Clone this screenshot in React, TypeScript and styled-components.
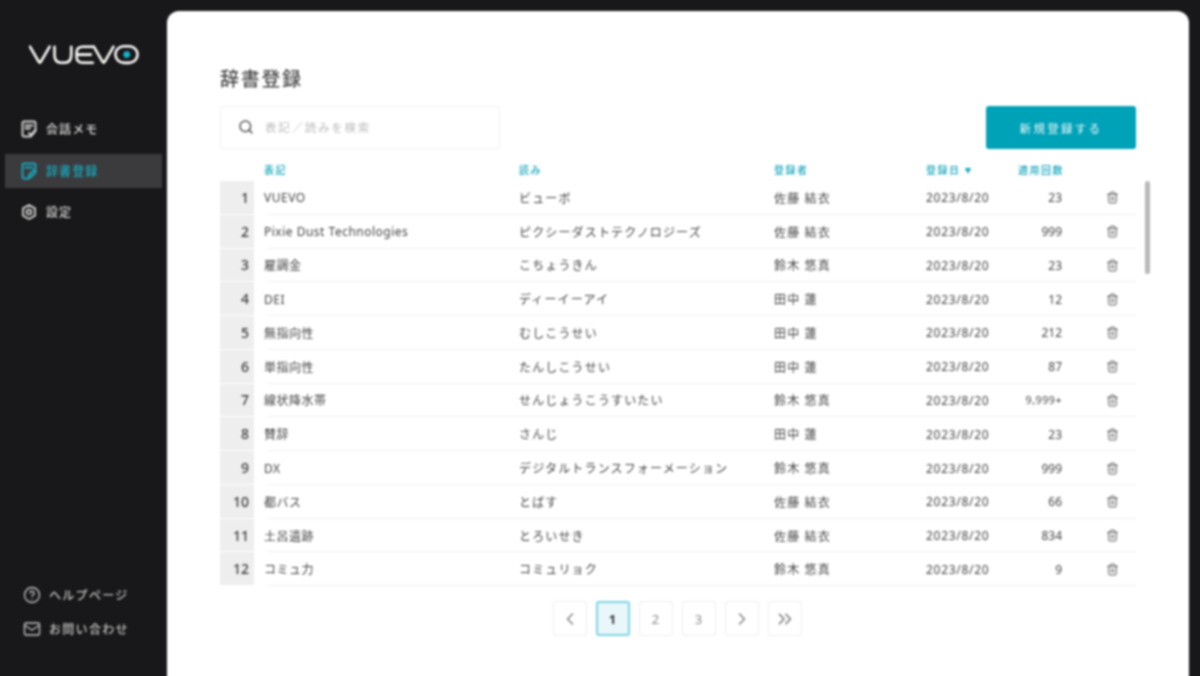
import React from "react";
import styled, { createGlobalStyle } from "styled-components";
import { Search, Trash2, ChevronLeft, ChevronRight, ChevronsRight, CircleHelp, Mail } from "lucide-react";

const Global = createGlobalStyle`
  html, body { margin: 0; padding: 0; height: 100%; background: #18181a; overflow: hidden; }
  #root { height: 676px; overflow: hidden; }
  * { box-sizing: border-box; }
`;

const FONT = `"Noto Sans", "Noto Sans CJK JP", sans-serif`;
const ACCENT = "#18a7bd";

const Page = styled.div`
  display: flex;
  width: 1200px;
  height: 690px;
  overflow: hidden;
  background: #18181a;
  font-family: ${FONT};
  filter: blur(0.85px);
`;

const Sidebar = styled.aside`
  width: 167px;
  flex: none;
  display: flex;
  flex-direction: column;
  padding: 44px 5px 51px;
`;

const LogoWrap = styled.div`
  padding-left: 24px;
  height: 22px;
  margin-bottom: 46px;
`;

const Nav = styled.nav`
  display: flex;
  flex-direction: column;
  gap: 7.5px;
`;

const NavItem = styled.div<{ $active?: boolean }>`
  display: flex;
  align-items: center;
  gap: 9px;
  height: 34px;
  padding-left: 16px;
  background: ${(p) => (p.$active ? "#3b3b3d" : "transparent")};
  color: ${(p) => (p.$active ? ACCENT : "#d6d6d6")};
  font-size: 12px;
  font-weight: 500;
  letter-spacing: 1.1px;
`;

const SubNav = styled.div`
  margin-top: auto;
  display: flex;
  flex-direction: column;
  gap: 14px;
`;

const SubItem = styled.div`
  display: flex;
  align-items: center;
  gap: 8px;
  height: 20px;
  padding-left: 18px;
  color: #c4c4c4;
  font-size: 12px;
  font-weight: 500;
  letter-spacing: 1.3px;
`;

const Main = styled.main`
  width: 1022px;
  height: 700px;
  flex: none;
  margin-top: 11px;
  background: #fff;
  border-radius: 12px 12px 0 0;
  padding: 53px 53px 0;
`;

const Title = styled.h1`
  margin: 0 0 14px;
  height: 28px;
  line-height: 30px;
  font-size: 19px;
  font-weight: 500;
  letter-spacing: 1.7px;
  color: #4a4a4a;
`;

const Toolbar = styled.div`
  display: flex;
  justify-content: space-between;
  align-items: stretch;
  height: 43px;
`;

const SearchBox = styled.div`
  width: 280px;
  display: flex;
  align-items: center;
  gap: 11px;
  padding: 0 0 1px 17px;
  border: 1px solid #efefef;
  border-radius: 3px;
  color: #bdbdbd;
  font-size: 11.5px;
  letter-spacing: 1.75px;
  svg { color: #555; flex: none; }
`;

const AddButton = styled.button`
  width: 150px;
  border: none;
  border-radius: 3px;
  background: #00a2b8;
  color: #e9f8fa;
  font-family: ${FONT};
  font-size: 11.5px;
  letter-spacing: 2.3px;
  padding: 0;
`;

const TableHead = styled.div`
  display: grid;
  grid-template-columns: 44px 255px 255px 152px 92px 44px 74px;
  height: 32px;
  padding-top: 13px;
  font-size: 10px;
  line-height: 16px;
  letter-spacing: 1.5px;
  color: ${ACCENT};
  font-weight: 500;
`;

const HeadCell = styled.div<{ $col: number }>`
  grid-column: ${(p) => p.$col};
  white-space: nowrap;
`;

const SortMark = styled.span`
  font-size: 7px;
  margin-left: 4px;
  vertical-align: 1px;
`;

const TableBody = styled.div`
  display: flex;
  gap: 9px;
  margin-right: -14px;
  align-items: flex-start;
`;

const Rows = styled.div`
  width: 916px;
  flex: none;
`;

const Thumb = styled.div`
  width: 5px;
  height: 93px;
  flex: none;
  border-radius: 3px;
  background: #b8b8b8;
`;

const Row = styled.div`
  display: grid;
  grid-template-columns: 34px 13px 252px 255px 152px 92px 44px 74px;
  height: 33.77px;
  align-items: center;
  font-size: 12px;
  letter-spacing: 1.15px;
  color: #444;
  white-space: nowrap;
`;

const RowNo = styled.div`
  height: calc(100% - 1px);
  align-self: start;
  background: #eeeeee;
  display: flex;
  align-items: center;
  justify-content: flex-end;
  padding-right: 5px;
  font-size: 14px;
  font-weight: 500;
  letter-spacing: 0;
  color: #3c3c3c;
`;

const Cell = styled.div<{ $col: number }>`
  grid-column: ${(p) => p.$col};
  grid-row: 1;
  height: 100%;
  display: flex;
  align-items: center;
  padding-top: 1px;
  border-bottom: 1px solid #f0f0f0;
`;

const Gap = styled.div`
  grid-column: 2;
  grid-row: 1;
`;

const Word = styled.span`
  margin-left: -3px;
  letter-spacing: 0.5px;
`;

const DateText = styled.span`
  letter-spacing: 0.7px;
`;

const CountCell = styled(Cell)`
  justify-content: flex-end;
  font-size: 12px;
  letter-spacing: 0;
`;

const SmallCount = styled.span`
  font-size: 10.5px;
  letter-spacing: 0.6px;
`;

const ActionCell = styled(Cell)`
  padding-left: 44px;
  svg { color: #555; }
`;

const Pager = styled.div`
  display: flex;
  justify-content: center;
  gap: 9px;
  margin-top: 15px;
  padding-right: 2px;
`;

const PageBtn = styled.div<{ $active?: boolean }>`
  width: 34px;
  height: 35px;
  display: flex;
  align-items: center;
  justify-content: center;
  border: ${(p) => (p.$active ? "2px solid #7fd5e2" : "1px solid #eeeeee")};
  background: ${(p) => (p.$active ? "#e9f6fa" : "#fff")};
  border-radius: 3px;
  font-size: 13px;
  font-weight: ${(p) => (p.$active ? 700 : 400)};
  color: ${(p) => (p.$active ? "#3c3c3c" : "#8a8a8a")};
  svg { color: #808080; }
`;

const Logo = () => (
  <svg width="110" height="22" viewBox="0 0 112 22" fill="none" stroke="#ffffff" strokeWidth="2.6" strokeLinecap="round" strokeLinejoin="round" role="img" aria-label="VUEVO">
    <path d="M1 2.5 L10 18 Q11 19.5 12 18 L21 2.5" />
    <path d="M26 2.5 V11 Q26 18.8 33 18.8 H36 Q43 18.8 43 11 V2.5" />
    <path d="M65 2.5 H55 Q48.5 2.5 48.5 8 V13 Q48.5 18.8 55 18.8 H65 M49 10.6 H63" />
    <path d="M66 2.5 L75 18 Q76 19.5 77 18 L86 2.5" />
    <rect x="88" y="2" width="22.5" height="17" rx="8.5" />
    <circle cx="99.5" cy="10.5" r="3.4" fill="#12b5d0" stroke="none" />
  </svg>
);

const MemoIcon = () => (
  <svg width="16" height="18" viewBox="0 0 16 18" fill="none" stroke="currentColor" strokeWidth="1.9" strokeLinecap="round" strokeLinejoin="round">
    <path d="M3 1.5 H13 Q14.5 1.5 14.5 3 V11 L10 16.5 H3 Q1.5 16.5 1.5 15 V3 Q1.5 1.5 3 1.5 Z" />
    <path d="M4.5 5.5 H11.5 M4.5 8.5 H9" />
    <path d="M8 13 L10 15 L14.5 10" />
  </svg>
);

const DictIcon = () => (
  <svg width="16" height="18" viewBox="0 0 16 18" fill="none" stroke="currentColor" strokeWidth="1.9" strokeLinecap="round" strokeLinejoin="round">
    <path d="M8 16.5 H3 Q1.5 16.5 1.5 15 V3 Q1.5 1.5 3 1.5 H13 Q14.5 1.5 14.5 3 V7" />
    <path d="M4.5 5.5 H11.5" />
    <path d="M8 13 L13 8 L15 10 L10 15 H8 Z" />
  </svg>
);

const GearIcon = () => (
  <svg width="16" height="16" viewBox="0 0 16 16" fill="none" stroke="currentColor" strokeWidth="1.8" strokeLinejoin="round">
    <path d="M8 1 L14 4.4 V11.6 L8 15 L2 11.6 V4.4 Z" />
    <circle cx="8" cy="8" r="2.4" />
  </svg>
);

type Item = [string, string, string, string, string];
const data: Item[] = [
  ["VUEVO", "ビューボ", "佐藤 結衣", "2023/8/20", "23"],
  ["Pixie Dust Technologies", "ピクシーダストテクノロジーズ", "佐藤 結衣", "2023/8/20", "999"],
  ["雇調金", "こちょうきん", "鈴木 悠真", "2023/8/20", "23"],
  ["DEI", "ディーイーアイ", "田中 蓮", "2023/8/20", "12"],
  ["無指向性", "むしこうせい", "田中 蓮", "2023/8/20", "212"],
  ["単指向性", "たんしこうせい", "田中 蓮", "2023/8/20", "87"],
  ["線状降水帯", "せんじょうこうすいたい", "鈴木 悠真", "2023/8/20", "9,999+"],
  ["賛辞", "さんじ", "田中 蓮", "2023/8/20", "23"],
  ["DX", "デジタルトランスフォーメーション", "鈴木 悠真", "2023/8/20", "999"],
  ["都バス", "とばす", "佐藤 結衣", "2023/8/20", "66"],
  ["土呂遺跡", "とろいせき", "佐藤 結衣", "2023/8/20", "834"],
  ["コミュ力", "コミュリョク", "鈴木 悠真", "2023/8/20", "9"],
];

export default function App() {
  return (
    <Page>
      <Global />
      <Sidebar>
        <LogoWrap><Logo /></LogoWrap>
        <Nav>
          <NavItem><MemoIcon />会話メモ</NavItem>
          <NavItem $active><DictIcon />辞書登録</NavItem>
          <NavItem><GearIcon />設定</NavItem>
        </Nav>
        <SubNav>
          <SubItem><CircleHelp size={18} strokeWidth={1.8} />ヘルプページ</SubItem>
          <SubItem><Mail size={18} strokeWidth={1.8} />お問い合わせ</SubItem>
        </SubNav>
      </Sidebar>
      <Main>
        <Title>辞書登録</Title>
        <Toolbar>
          <SearchBox><Search size={16} strokeWidth={2.2} />表記／読みを検索</SearchBox>
          <AddButton>新規登録する</AddButton>
        </Toolbar>
        <TableHead>
          <HeadCell $col={2}>表記</HeadCell>
          <HeadCell $col={3}>読み</HeadCell>
          <HeadCell $col={4}>登録者</HeadCell>
          <HeadCell $col={5}>登録日<SortMark>▼</SortMark></HeadCell>
          <HeadCell $col={6}>適用回数</HeadCell>
        </TableHead>
        <TableBody>
          <Rows>
            {data.map(([word, reading, user, date, count], i) => (
              <Row key={i}>
                <RowNo>{i + 1}</RowNo>
                <Gap />
                <Cell $col={3}><Word>{word}</Word></Cell>
                <Cell $col={4}>{reading}</Cell>
                <Cell $col={5}>{user}</Cell>
                <Cell $col={6}><DateText>{date}</DateText></Cell>
                <CountCell $col={7}>{count.length > 4 ? <SmallCount>{count}</SmallCount> : count}</CountCell>
                <ActionCell $col={8}><Trash2 size={13} strokeWidth={1.8} /></ActionCell>
              </Row>
            ))}
          </Rows>
          <Thumb />
        </TableBody>
        <Pager>
          <PageBtn><ChevronLeft size={20} strokeWidth={1.8} /></PageBtn>
          <PageBtn $active>1</PageBtn>
          <PageBtn>2</PageBtn>
          <PageBtn>3</PageBtn>
          <PageBtn><ChevronRight size={20} strokeWidth={1.8} /></PageBtn>
          <PageBtn><ChevronsRight size={22} strokeWidth={1.8} /></PageBtn>
        </Pager>
      </Main>
    </Page>
  );
}
